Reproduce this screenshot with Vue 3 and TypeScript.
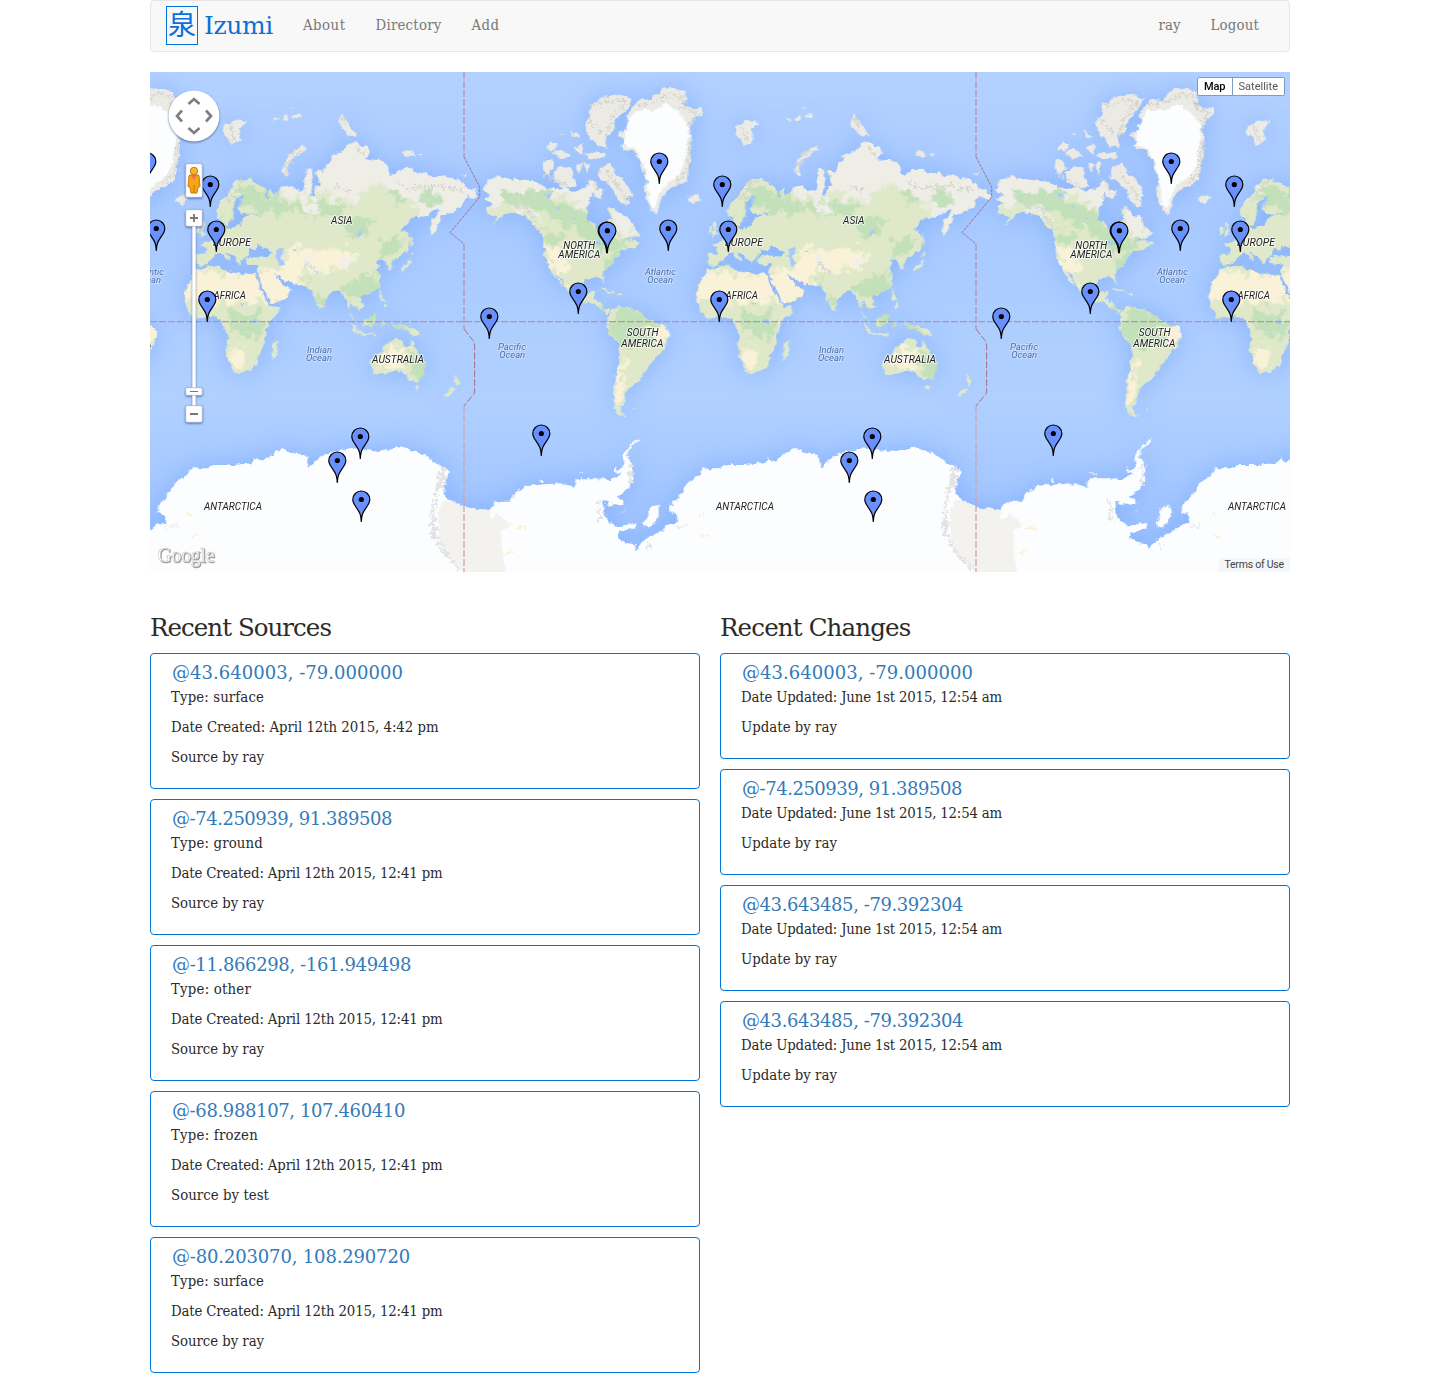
<script setup lang="ts">
interface Line { text: string; width: number }
interface Card { title: Line; lines: Line[] }
interface Label { text: string; x: number; y: number; w: number; ocean?: boolean }

// Tracks an element's letters so that the text spans the given width.
const vFit = {
  mounted(el: HTMLElement, binding: { value: number }) {
    const count = (el.textContent ?? '').trim().length
    const natural = el.getBoundingClientRect().width
    el.style.letterSpacing = `${(binding.value - natural) / count}px`
  },
}

const leftNav: Line[] = [
  { text: 'About', width: 42.5 },
  { text: 'Directory', width: 66 },
  { text: 'Add', width: 28 },
]
const rightNav: Line[] = [
  { text: 'ray', width: 22 },
  { text: 'Logout', width: 48.5 },
]

const source = (title: string, tw: number, type: string, yw: number, time: string, dw: number, by: string, bw: number): Card => ({
  title: { text: title, width: tw },
  lines: [
    { text: `Type: ${type}`, width: yw },
    { text: `Date Created: April 12th 2015, ${time}`, width: dw },
    { text: `Source by ${by}`, width: bw },
  ],
})
const change = (title: string, tw: number): Card => ({
  title: { text: title, width: tw },
  lines: [
    { text: 'Date Updated: June 1st 2015, 12:54 am', width: 261 },
    { text: 'Update by ray', width: 96 },
  ],
})

const sources: Card[] = [
  source('@43.640003, -79.000000', 231, 'surface', 93, '4:42 pm', 267.5, 'ray', 93),
  source('@-74.250939, 91.389508', 220, 'ground', 92, '12:41 pm', 271.5, 'ray', 93),
  source('@-11.866298, -161.949498', 239, 'other', 80, '12:41 pm', 271.5, 'ray', 93),
  source('@-68.988107, 107.460410', 233, 'frozen', 87, '12:41 pm', 271.5, 'test', 98),
  source('@-80.203070, 108.290720', 238, 'surface', 93, '12:41 pm', 271.5, 'ray', 93),
]
const changes: Card[] = [
  change('@43.640003, -79.000000', 231),
  change('@-74.250939, 91.389508', 220),
  change('@43.643485, -79.392304', 221),
  change('@43.643485, -79.392304', 221),
]

const offsets = [-512, 0, 512, 1024]
const pins: [number, number][] = [
  [509.3, 89.5], [60.3, 112.5], [518.3, 156.5], [66.3, 157.5], [456.6, 158.7], [457.4, 158.7], [428.3, 219.5],
  [57.3, 227.5], [339.3, 244.5], [391.3, 361.5], [210.3, 364.5], [187.3, 388.5], [211.3, 427.5],
]
const labels: Label[] = [
  { text: 'ASIA', x: 181, y: 151.6, w: 21.5 },
  { text: 'EUROPE', x: 63, y: 173.6, w: 38 },
  { text: 'AFRICA', x: 63.5, y: 226.6, w: 32.5 },
  { text: 'AUSTRALIA', x: 222, y: 290.6, w: 52 },
  { text: 'ANTARCTICA', x: 54, y: 437.6, w: 58 },
  { text: 'NORTH', x: 413.3, y: 177.4, w: 32 },
  { text: 'AMERICA', x: 408.3, y: 186.4, w: 42 },
  { text: 'SOUTH', x: 476.7, y: 264.4, w: 31.8 },
  { text: 'AMERICA', x: 471.3, y: 274.6, w: 42 },
  { text: 'Indian', x: 157, y: 281.2, w: 25, ocean: true },
  { text: 'Ocean', x: 156, y: 289.2, w: 26, ocean: true },
  { text: 'Atlantic', x: 495, y: 203.4, w: 31, ocean: true },
  { text: 'Ocean', x: 497.3, y: 211.2, w: 25.6, ocean: true },
  { text: 'Pacific', x: 348, y: 278.4, w: 28, ocean: true },
  { text: 'Ocean', x: 349.2, y: 286.2, w: 26, ocean: true },
]
const placed = offsets
  .flatMap((o) => labels.map((l) => ({ ...l, x: l.x + o })))
  .filter((l) => l.x + l.w > 0 && l.x < 1140)
</script>

<template>
  <div class="container">
    <nav class="navbar">
      <a class="brand"><span class="kanji">泉</span><span v-fit="69" class="name">Izumi</span></a>
      <ul>
        <li v-for="n in leftNav" :key="n.text"><a v-fit="n.width">{{ n.text }}</a></li>
      </ul>
      <ul class="right">
        <li v-for="n in rightNav" :key="n.text"><a v-fit="n.width">{{ n.text }}</a></li>
      </ul>
    </nav>

    <svg class="map" width="1140" height="500" viewBox="0 0 1140 500">
      <defs>
        <filter id="coast" x="0" y="0" width="1140" height="500" filterUnits="userSpaceOnUse">
          <feTurbulence type="fractalNoise" baseFrequency="0.16" numOctaves="3" seed="4" result="n" />
          <feDisplacementMap in="SourceGraphic" in2="n" scale="6" xChannelSelector="R" yChannelSelector="G" />
        </filter>
        <filter id="patchy" x="-20" y="0" width="1600" height="1300" filterUnits="userSpaceOnUse" color-interpolation-filters="sRGB">
          <feGaussianBlur stdDeviation="3" result="b" />
          <feTurbulence type="fractalNoise" baseFrequency="0.035" numOctaves="4" seed="9" result="n" />
          <feDisplacementMap in="b" in2="n" scale="75" xChannelSelector="R" yChannelSelector="G" />
        </filter>
        <filter id="relief" x="0" y="0" width="1140" height="500" filterUnits="userSpaceOnUse">
          <feTurbulence type="fractalNoise" baseFrequency="0.28" numOctaves="3" seed="2" result="n" />
          <feDisplacementMap in="SourceGraphic" in2="n" scale="11" xChannelSelector="R" yChannelSelector="G" />
        </filter>
        <filter id="glow" x="-60" y="-60" width="1260" height="620" filterUnits="userSpaceOnUse">
          <feGaussianBlur stdDeviation="13" />
        </filter>

        <g id="mainland">
          <path d="M197 413L210 390 235 370 243 345 265 325 300 318 305 330 330 338 348 355 345 372 355 385 350 360 365 350 372 370 395 345 425 340 440 358 465 350 462 320 470 290 485 290 490 320 485 355 478 370 492 370 495 345 510 340 508 325 495 300 505 292 520 300 530 275 545 265 545 250 575 240 600 215 620 208 635 225 655 225 660 245 640 265 665 262 700 268 715 285 720 310 735 305 755 290 785 290 800 305 830 300 850 315 880 310 900 318 925 322 950 345 975 355 985 375 970 385 955 372 940 390 935 405 900 420 875 430 860 470 845 492 838 475 845 445 865 425 870 410 850 415 835 432 800 435 785 440 765 460 755 475 770 480 782 500 775 530 755 550 735 560 722 570 725 590 715 592 708 570 695 565 680 565 690 580 680 590 692 610 690 640 670 660 650 665 635 670 630 680 640 705 625 715 610 700 600 690 598 715 615 742 605 735 595 705 580 670 565 655 545 660 530 680 518 715 508 712 500 700 487 660 470 640 445 640 425 635 405 625 390 615 375 600 385 620 405 640 425 655 415 675 385 690 362 695 345 660 328 625 318 600 325 585 328 575 310 580 290 575 285 560 300 552 350 556 370 545 345 528 325 522 318 535 298 530 295 545 280 560 270 580 258 560 240 548 225 540 240 565 225 560 212 540 190 555 175 575 150 582 138 575 140 545 165 545 170 530 150 515 180 505 195 485 215 475 215 460 240 470 270 460 275 440 300 428 275 424 262 410 270 385 282 370 270 372 252 395 250 410 248 430 236 460 222 460 212 438 200 435Z" />
          <path d="M140 590L180 582 205 580 215 590 250 602 280 605 315 605 320 625 335 660 355 695 365 705 392 700 385 725 360 750 348 775 345 810 325 850 320 880 290 900 255 905 240 870 225 830 235 800 225 775 212 745 190 732 160 738 130 740 112 710 103 680 110 640Z" />
          <path d="M660 865L690 845 700 825 720 810 735 800 760 805 765 825 778 825 783 800 795 830 825 870 825 895 810 925 780 927 765 905 740 895 705 905 670 910Z" />
          <path d="M365 815L385 805 380 850 365 862ZM790 942H807L800 956ZM913 908L932 928 920 944ZM885 972L908 945 918 950 895 974ZM598 742L628 778 614 778ZM638 748L680 722 678 752 660 765 642 758ZM688 745L706 748 696 768ZM618 780L682 786 680 791 618 786ZM722 752L760 758 790 770 812 788 785 790 765 775 740 770ZM688 640L696 670 706 690 692 685ZM700 690L712 705 700 712ZM752 588L772 576 778 560 788 566 775 588 755 596ZM775 548L792 540 785 552ZM782 478L788 510 783 530ZM154 446L164 450 160 474 168 488 150 494 156 474ZM140 464L150 462 150 484 138 486Z" />
          <g transform="translate(870 0)">
            <path d="M130 350L145 325 175 312 215 322 245 325 290 330 320 345 360 350 380 345 400 360 440 345 450 320 465 330 470 350 455 365 450 390 440 405 440 445 465 460 480 485 505 450 515 440 505 410 520 405 545 430 570 435 575 460 602 485 575 500 545 505 580 505 605 515 575 530 545 535 530 555 515 580 490 600 492 612 497 637 485 620 470 615 440 620 425 640 412 652 405 670 430 680 450 658 467 660 460 680 480 690 490 712 510 715 500 727 480 712 455 690 430 692 400 672 375 648 362 620 345 595 352 615 372 645 355 630 335 597 325 577 312 555 310 520 310 500 295 475 280 455 255 430 225 425 195 420 180 440 155 462 175 435 145 430 135 405 160 395 128 380 155 370 130 355Z" />
            <path d="M510 715L530 703 550 705 580 712 605 725 625 744 680 765 690 785 670 830 635 870 610 905 595 925 570 945 555 970 555 990 540 1005 545 1020 557 1032 535 1030 520 1000 522 960 528 910 538 860 540 820 510 790 498 765 505 740Z" />
            <path d="M484 648L520 658 512 662 486 653ZM526 662L545 664 540 670 526 667ZM578 1007L592 1008 582 1012Z" />
          </g>
        </g>
        <g id="arctic">
          <path d="M75 375L105 370 115 380 95 397 78 390ZM220 160L255 145 290 150 265 172 275 205 245 222 235 195 220 185ZM395 300L415 250 465 220 467 233 425 262 410 290 415 315ZM565 155L575 123 592 150 602 165 622 190 602 192 580 175ZM370 142L385 136 388 146ZM400 138L412 128 418 140 406 148ZM425 132L450 124 452 134 436 138ZM422 104L430 106 424 112ZM758 240L782 234 794 254 764 254ZM800 246H815V256ZM935 308L950 306 948 314Z" />
          <g transform="translate(870 0)">
            <path d="M450 100L490 75 530 65 577 80 560 110 530 140 520 180 495 190 502 228 475 222 445 190 432 155 450 130ZM315 235L330 208 352 215 345 235ZM338 242L365 230 390 250 365 262ZM393 172L418 195 400 198ZM400 228L430 213 425 250ZM430 245L492 240 497 258 450 262ZM340 300L365 283 392 290 402 320 412 340 370 347 345 327ZM310 265L337 264 342 288 320 308 307 290ZM408 272L427 278 420 302ZM430 272L447 275 440 312ZM480 285L512 275 522 300 550 320 565 345 577 370 560 380 571 400 555 404 535 385 520 350 500 330 475 320ZM458 350L492 355 485 382 463 375ZM360 186L372 184 368 192Z" />
            <path d="M580 100L600 80 635 85 640 70 670 50 700 47 735 60 740 85 725 95 755 110 787 105 787 125 765 140 750 165 757 210 750 260 745 300 740 325 715 340 690 350 665 375 655 410 650 428 632 415 618 385 612 350 622 330 610 300 600 265 580 235 555 232 540 225 555 205 530 190 555 175 575 150 558 135Z" />
          </g>
        </g>
        <g id="south" transform="translate(0 744)">
          <path d="M-4 634L25 610 45 610 45 585 22 578 25 555 60 520 75 490 110 465 125 445 165 445 190 435 250 435 300 430 320 415 340 425 370 400 400 385 430 400 470 405 475 445 500 420 530 400 600 385 630 390 700 393 750 382 800 395 830 410 860 430 900 455 885 480 880 520 910 545 942 562 1015 570 1035 545 1080 545 1090 520 1130 497 1230 490 1275 500 1280 475 1340 475 1380 478 1410 465 1395 450 1405 452 1420 435 1420 400 1450 365 1475 355 1440 385 1430 410 1445 430 1450 475 1430 510 1400 530 1420 540 1420 555 1400 557 1380 545 1360 540 1365 590 1400 620 1455 608 1455 625 1405 635 1405 655 1430 670 1456 672 1461 692 1470 670 1500 650 1540 630V840H-4Z" />
          <path d="M1480 612L1502 560 1525 555 1527 590 1502 622 1482 622ZM1368 545L1383 542 1385 556 1370 558ZM1412 580L1430 566 1422 574ZM1275 457L1300 458 1298 463ZM1170 478L1184 486 1172 486ZM1190 484L1200 486ZM1393 450L1396 435 1402 452Z" />
        </g>
        <mask id="landmask" maskUnits="userSpaceOnUse" x="-20" y="0" width="1640" height="1300">
          <use href="#mainland" fill="#fff" />
        </mask>

        <g id="shore" transform="scale(.33333)">
          <use href="#mainland" /><use href="#arctic" /><use href="#south" />
        </g>
        <g id="world" transform="scale(.33333)">
          <g mask="url(#landmask)">
            <rect x="-20" width="1640" height="1300" fill="#dfe9ca" />
            <g filter="url(#patchy)">
              <g fill="#eeede6">
                <path d="M400 180H1010V500H850L800 400 740 375 700 340 640 350 600 390 550 380 510 350 450 385 390 370Z" />
                <path d="M1180 300H1350V440L1300 430 1240 360 1180 385 1120 410 1000 400 990 300ZM1180 380L1150 420 1100 430 1080 405ZM1370 400H1460V500H1410Z" />
              </g>
              <g fill="#c2e0b9">
                <path d="M240 400L270 340 330 350 420 400 560 390 600 410 560 440 450 420 340 420 270 400 240 450ZM560 455L650 430 670 480 620 500ZM700 510L760 490 740 540 700 560ZM720 350L760 370 740 410ZM820 345L860 370 850 405 810 395ZM620 620L690 600 680 660 600 680 570 640ZM240 725L330 720 340 790 260 800ZM495 650L510 710 525 690ZM630 720L700 710 800 790 700 800ZM440 640L480 620 470 650Z" />
                <path d="M1050 365L1180 350 1220 380 1300 430 1350 480 1440 510 1360 540 1280 480 1180 420 1060 400ZM1180 470L1240 490 1210 520ZM1350 570L1390 540 1420 530 1380 600ZM1380 760L1420 700 1520 740 1500 820 1420 830 1380 790ZM1310 680L1360 720H1310Z" />
                <path d="M780 840L835 870 820 930 790 920Z" />
              </g>
              <g fill="#faf2d8">
                <path d="M100 600H340L360 690 200 695 100 680ZM330 600L430 650 390 700 350 680ZM400 540L470 520 620 540 600 590 500 600 400 600ZM330 590L430 590 470 650 400 640ZM240 830L280 820 290 880 250 890ZM690 840L750 830 780 880 690 895Z" />
                <path d="M1180 520L1230 530 1260 590 1230 640 1190 570ZM1400 870L1430 850 1420 1010 1390 980ZM1480 760L1560 750 1540 820Z" />
              </g>
              <g fill="#f0efeb">
                <path d="M470 570L500 570 520 610 500 610ZM440 380L470 375 500 410 480 420ZM240 400L255 340 270 335ZM1090 380L1150 420 1180 480 1160 450Z" />
                <path d="M540 560H600V580ZM700 330L720 340 710 370Z" />
              </g>
            </g>
            <g fill="#a6c8fb">
              <path d="M378 532L398 525 400 545 392 560 404 578 388 582 380 560ZM620 490L640 468 636 484 624 494ZM270 690 280 695 276 702ZM308 742H320V756H308ZM425 535H438V542ZM1180 368L1206 366 1200 380ZM1220 400L1234 404 1228 412ZM1260 435H1278V439ZM1330 512L1350 506 1362 518ZM1350 524L1356 542 1350 540ZM1365 524L1375 538 1368 540ZM262 405L275 380 282 372 276 395ZM290 425L325 423 320 430Z" />
            </g>
          </g>
          <use href="#arctic" fill="#ebeae4" />
          <use href="#south" fill="#fcfdfe" />
          <path transform="translate(0 744)" fill="#f4f2ee" d="M864 580L880 540 910 545 942 562 1015 570 1020 595 1035 595 1040 580 1085 615 1053 635 1065 770H960L890 710 864 640Z" />
          <path fill="#fcfdfe" transform="translate(870 0)" d="M585 115L650 112 680 95 715 120 748 165 742 220 733 280 712 315 680 335 655 370 645 410 630 400 625 350 615 290 590 235 550 215 560 160Z" />
        </g>
        <g id="ridges" transform="scale(.33333)" fill="none" stroke-linecap="round">
          <g stroke="#e2e3e4" stroke-width="11" stroke-dasharray="7 15">
            <path d="M872 1200L862 1250 850 1300 845 1360 865 1410 890 1450 930 1490" />
            <path d="M880 1190L875 1240 M852 1340L850 1400" stroke-width="14" />
            <path d="M1440 1180L1442 1230M1345 1290L1350 1340M1496 1420L1490 1440" />
          </g>
          <g stroke="#d6d6ce" stroke-width="8" stroke-dasharray="6 12">
            <path d="M1330 100L1400 85 1430 90 1390 130 1370 190M1320 150L1350 180M1470 100L1510 90 1560 65 1600 75 1600 110 1640 120 1620 160M1620 210L1610 300 1580 330M1370 300L1410 350 1430 390M1190 310L1250 340" />
            <path d="M235 385L265 335 295 325M240 165L255 205M405 300L425 250 455 232M580 140L590 165M560 345L600 355M740 330L770 350 870 340 930 355M470 575L510 605M1095 385L1140 420 1170 470M620 230L640 245" />
          </g>
          <path d="M1095 1368H1125M1060 1446L1090 1438M116 1328H122M124 1390H134" stroke="#f9efd2" stroke-width="7" />
          <path d="M48 1364L80 1362" stroke="#e8e8e8" stroke-width="5" />
        </g>
        <g id="pin">
          <path d="M0 22C-.2 14.5-2.2 12-5.2 7.6C-7.2 4.9-8.5 2.8-8.5 0A8.5 8.5 0 0 1 8.5 0C8.5 2.8 7.2 4.9 5.2 7.6C2.2 12 .2 14.5 0 22Z" fill="#6991fd" stroke="#000" stroke-width="1.2" stroke-linejoin="round" />
          <circle r="2.6" />
        </g>
        <linearGradient id="sea" x1="0" y1="0" x2="0" y2="1">
          <stop offset="0" stop-color="#b3d1ff" /><stop offset=".3" stop-color="#a9caff" /><stop offset=".65" stop-color="#b0d0ff" /><stop offset=".85" stop-color="#a4c7ff" />
        </linearGradient>
      </defs>

      <rect width="1140" height="500" fill="url(#sea)" />
      <g filter="url(#glow)" opacity=".62" fill="#75a6fa">
        <use v-for="o in offsets" :key="o" href="#shore" :x="o" />
      </g>
      <g filter="url(#coast)">
        <use v-for="o in offsets" :key="o" href="#world" :x="o" />
      </g>
      <g filter="url(#relief)">
        <use v-for="o in offsets" :key="o" href="#ridges" :x="o" />
      </g>

      <g fill="none" stroke="#b293b5" stroke-width="1.3" stroke-dasharray="7 2">
        <path d="M0 249.7H1140" />
        <g v-for="o in [0, 512]" :key="o" :transform="`translate(${o})`">
          <path d="M314 0V85M314 172V257" />
          <path d="M314 85L329.7 115V125L300 160.5 314 172" stroke="#a07088" stroke-width="1" stroke-dasharray="3 1" />
          <path d="M314 257L324.6 270.5V321L314 334" stroke="#a86f87" stroke-width="1" />
          <path d="M314 334V500" stroke="#cfa4af" />
        </g>
      </g>

      <text v-for="(l, i) in placed" :key="i" :class="['place', { ocean: l.ocean }]" :x="l.x" :y="l.y" :textLength="l.w" lengthAdjust="spacingAndGlyphs">{{ l.text }}</text>
      <g v-for="o in offsets" :key="o" :transform="`translate(${o})`">
        <use v-for="(p, i) in pins" :key="i" href="#pin" :x="p[0]" :y="p[1]" />
      </g>

      <g class="controls">
        <circle cx="44" cy="44" r="25.4" fill="#fff" />
        <g fill="none" stroke="#808080" stroke-width="2.7">
          <path d="M38.5 32L44 27 49.5 32M38.5 56L44 61 49.5 56M32 38.5L27 44 32 49.5M56 38.5L61 44 56 49.5" />
        </g>
        <rect x="42.3" y="150" width="3.4" height="186" fill="#fff" />
        <g fill="#fff" stroke="#9fb1d0" stroke-width=".7">
          <rect x="35.7" y="91.7" width="16.6" height="33.6" rx="1.5" />
          <rect x="35.7" y="137.7" width="16.6" height="16.6" rx="1.5" />
          <rect x="35.7" y="315.7" width="16.6" height="7.6" rx="1.5" />
          <rect x="35.7" y="333.7" width="16.6" height="16.6" rx="1.5" />
        </g>
      </g>
      <path d="M40 146H48M44 142V150M40 342H48" stroke="#777" stroke-width="1.8" />
      <path d="M40 319.5H48" stroke="#777" />
      <g stroke="#bd7400" stroke-width=".9">
        <path d="M39 103.5Q44 101 49 103.5L50 114.5 48 115.5 47 121H41L40 115.5 38 114.5Z" fill="#f5a415" />
        <circle cx="44" cy="99" r="3.7" fill="#f9b52a" />
        <path d="M44 113V121" />
        <path d="M41.6 103.3H46.4L44 107.2Z" fill="#f3706e" stroke="#e96a50" />
      </g>
      <g class="types">
        <rect x="1047.5" y="5.5" width="87" height="18" rx="1.5" fill="#fff" stroke="#819bc5" />
        <path d="M1082.5 6V23" stroke="#819bc5" />
        <text x="1054" y="18" textLength="21.5" class="active">Map</text>
        <text x="1088.5" y="18" textLength="39.5" fill="#555">Satellite</text>
      </g>
      <text class="google" x="7.5" y="490" textLength="57" lengthAdjust="spacingAndGlyphs">Google</text>
      <rect x="1069" y="486" width="71" height="14" fill="#f5f6f7" />
      <text class="terms" x="1074.5" y="496" textLength="59.5">Terms of Use</text>
    </svg>

    <main class="columns">
      <section class="sources">
        <h2><span v-fit="181">Recent Sources</span></h2>
        <article v-for="(c, i) in sources" :key="i" class="card">
          <h3><a v-fit="c.title.width">{{ c.title.text }}</a></h3>
          <p v-for="l in c.lines" :key="l.text"><span v-fit="l.width">{{ l.text }}</span></p>
        </article>
      </section>
      <section class="changes">
        <h2><span v-fit="190.5">Recent Changes</span></h2>
        <article v-for="(c, i) in changes" :key="i" class="card">
          <h3><a v-fit="c.title.width">{{ c.title.text }}</a></h3>
          <p v-for="l in c.lines" :key="l.text"><span v-fit="l.width">{{ l.text }}</span></p>
        </article>
      </section>
    </main>
  </div>
</template>

<style>
body { margin: 0; background: #fff; }
</style>

<style scoped>
.container {
  width: 1140px;
  height: 1383px;
  margin: 0 auto;
  overflow: hidden;
  color: #2b2b2b;
  font-family: "DejaVu Serif Condensed", "DejaVu Serif", "Noto Sans CJK JP", serif;
  font-stretch: condensed;
  font-size: 14.8px;
  line-height: 20px;
}
.navbar {
  box-sizing: border-box;
  height: 52px;
  display: flex;
  align-items: flex-start;
  border: 1px solid #e7e7e7;
  border-radius: 4px;
  background: #f8f8f8;
  padding: 0 15px;
}
.brand { display: flex; color: #0b70d8; }
.kanji {
  box-sizing: border-box;
  width: 32px;
  height: 39px;
  margin-top: 5px;
  border: 1px solid #0275d8;
  font: 400 28px/33px "Noto Sans CJK JP", sans-serif;
  text-align: center;
}
.name {
  margin: 10px 0 0 6px;
  font-family: "DejaVu Serif", serif;
  font-stretch: normal;
  font-size: 25px;
  line-height: 30px;
}
ul { display: flex; gap: 30px; margin: 14px 0 0 30px; padding: 0; list-style: none; }
ul.right { margin-left: auto; margin-right: 15px; }
li a, h2 span, h3 a, p span, .name { display: inline-block; white-space: nowrap; }
li a { color: #777; }
.map { display: block; margin-top: 20px; overflow: hidden; }
.place {
  font: italic 400 10px Roboto, sans-serif;
  fill: #222;
  stroke: #fff;
  stroke-width: 2px;
  stroke-opacity: .65;
  stroke-linejoin: round;
  paint-order: stroke;
}
.ocean { font-size: 9px; fill: #4f6fa8; stroke: #d3e4ff; }
.controls { filter: drop-shadow(0 1px 1.2px rgba(40, 60, 110, .65)); }
.types { font: 11px Roboto, sans-serif; }
.active { font-weight: 500; }
.google {
  font: 20px "Liberation Serif", serif;
  fill: #fff;
  stroke: #c4c4c4;
  stroke-width: .5px;
  filter: drop-shadow(1px 1px .6px #999);
}
.terms { font: 10.5px Roboto, sans-serif; fill: #444; }
.columns { display: flex; gap: 20px; margin-top: 40px; }
.sources { width: 550px; }
.changes { width: 570px; }
h2, h3 {
  font-family: "DejaVu Serif", serif;
  font-stretch: normal;
  font-weight: 400;
}
h2 { margin: 0 0 10px; font-size: 24.5px; line-height: 31px; }
.card {
  box-sizing: border-box;
  margin-bottom: 10px;
  padding: 9px 20px 11px;
  border: 1px solid #0275d8;
  border-radius: 4px;
}
h3 { margin: 0 0 0 1px; height: 24px; font-size: 18px; line-height: 20px; }
h3 a { color: #337ab7; }
p { height: 20px; margin: 0 0 10px; }
</style>
